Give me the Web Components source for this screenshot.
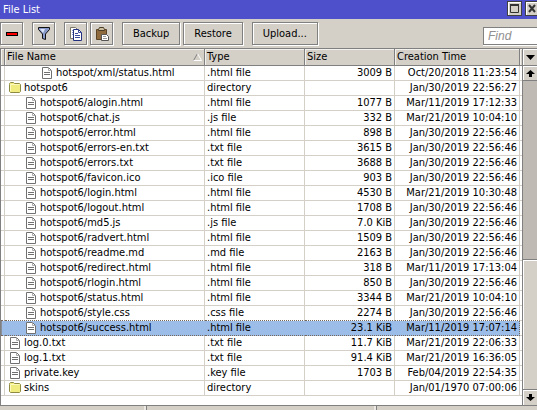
<!DOCTYPE html>
<html lang="en">
<head>
<meta charset="utf-8">
<title>File List</title>
<style>
html, body {
	height: 100%;
	margin: 0;
}
body {
	--face: #d4d0c8;
	--edge: #808080;
	--line: #d4d0c8;
	background: var(--face);
	color: #000;
	font: 11px/14px "DejaVu Sans Condensed", "DejaVu Sans", sans-serif;
	overflow: hidden;
}
</style>
</head>
<body>
<list-window>
	<title-bar slot="title">File List</title-bar>
	<tool-bar slot="tools">
		<tool-group>
			<tool-button icon="remove" label="Remove"></tool-button>
		</tool-group>
		<tool-group>
			<tool-button icon="filter" label="Filter"></tool-button>
		</tool-group>
		<tool-group>
			<tool-button icon="copy" label="Copy"></tool-button>
			<tool-button icon="paste" label="Paste"></tool-button>
		</tool-group>
		<tool-group>
			<tool-button>Backup</tool-button>
			<tool-button>Restore</tool-button>
		</tool-group>
		<tool-group>
			<tool-button>Upload...</tool-button>
		</tool-group>
		<find-box slot="end"></find-box>
	</tool-bar>
	<file-table></file-table>
	<scroll-strip slot="scroll"></scroll-strip>
	<status-bar slot="status"></status-bar>
</list-window>

<script>
function attach(host, html) {
	const tpl = document.createElement("template");
	tpl.innerHTML = html;
	host.attachShadow({ mode: "open" }).appendChild(tpl.content.cloneNode(true));
}

const ICONS = {
	remove: `<path d="M2 6h12v4H2z" fill="#000"/><path d="M3 7h10v2H3z" fill="#f00"/>`,
	filter: `<path d="M2.500 1.500h11v2L9.500 8v5.500l-3-1V8l-4-4.500z" fill="#8799c8" stroke="#111"/><path d="M4 3h5L7 7z" fill="#dce5f7"/>`,
	copy: `<path d="M2.500 1.500h5l2 2v9h-7z" fill="#fff" stroke="#7c7868"/><path d="M4 4.500h3M4 6.500h3M4 8.500h3" stroke="#8a98c8"/>
		<path d="M5.500 3.500h5l3 3v8h-8z" fill="#fff" stroke="#22307f"/><path d="M10.500 3.500v3h3M7 7.500h3M7 9.500h5M7 11.500h5" fill="none" stroke="#3c4a9c"/>`,
	paste: `<path d="M2.500 3.500h10v10h-10z" fill="#8f6a3c" stroke="#5c4426"/><path d="M4.500 4.500v-1l1-2h4l1 2v1z" fill="#c9bd9f" stroke="#4c3d26"/>
		<path d="M7.500 8.500h5l2 2v4h-7z" fill="#fff" stroke="#555"/><path d="M9 10.500h3M9 12.500h4" stroke="#999"/>`,
	file: `<path d="M2.500 1.500h6l3 3v8h-9z" fill="#fff" stroke="#707070"/><path d="M8.500 1.500v3h3" fill="none" stroke="#aaa"/><path d="M4 6.500h6M4 8.500h6" stroke="#707070"/>`,
	folder: `<path d="M1.500 3.500v-1l1-1h3l1 1h5l1 1v7l-1 1h-9l-1-1z" fill="#f0ec80" stroke="#8f8a42"/><path d="M2.500 10V3.500h9" fill="none" stroke="#fbf9bd"/>`
};

class GlyphIcon extends HTMLElement {
	constructor() {
		super();
		attach(this, `<style>
:host {
	display: block;
	flex: none;
	width: 16px;
	height: 16px;
}
:host([small]) {
	height: 14px;
}
svg {
	display: block;
	width: 100%;
	height: 100%;
}
</style>
<svg aria-hidden="true"></svg>`);
	}
	static get observedAttributes() {
		return ["name"];
	}
	attributeChangedCallback(name, oldval, newval) {
		this.shadowRoot.querySelector("svg").innerHTML = ICONS[newval] || "";
	}
}
customElements.define("glyph-icon", GlyphIcon);

class ListWindow extends HTMLElement {
	constructor() {
		super();
		attach(this, `<style>
:host {
	display: grid;
	height: 100vh;
	grid-template-columns: minmax(0, 1fr);
	grid-template-rows: auto auto minmax(0, 1fr) auto;
}
main {
	display: flex;
	min-height: 0;
	border-top: 1px solid var(--edge);
	border-left: 1px solid var(--edge);
	box-sizing: border-box;
}
#view {
	flex: 1;
	min-width: 0;
	overflow: hidden;
	background: #fff;
}
</style>
<slot name="title"></slot>
<slot name="tools"></slot>
<main><div id="view"><slot></slot></div><slot name="scroll"></slot></main>
<slot name="status"></slot>`);
	}
}
customElements.define("list-window", ListWindow);

class TitleBar extends HTMLElement {
	constructor() {
		super();
		attach(this, `<style>
:host {
	display: flex;
	justify-content: space-between;
	height: 19px;
	box-sizing: border-box;
	padding: 1px 0 0 3px;
	overflow: hidden;
	background: #4d4fcb;
	color: #fff;
}
h1 {
	margin: 0;
	font: inherit;
	line-height: 18px;
}
div {
	display: flex;
	gap: 3px;
	margin-right: -3px;
}
button {
	width: 15px;
	height: 15px;
	padding: 0;
	border: 1px solid #404040;
	background: var(--face);
	box-shadow: inset 1px 1px #fff;
}
svg {
	display: block;
	width: 13px;
	height: 13px;
}
</style>
<h1><slot></slot></h1>
<div>
	<button aria-label="Maximize"><svg><path d="M2.500 3.500h8v7h-8z" fill="none" stroke="#333"/><path d="M2 3h9" stroke="#333" stroke-width="2"/></svg></button>
	<button aria-label="Close"><svg><path d="M3 3l6 7M9 3l-6 7" stroke="#333" stroke-width="2"/></svg></button>
</div>`);
	}
}
customElements.define("title-bar", TitleBar);

class ToolBar extends HTMLElement {
	constructor() {
		super();
		attach(this, `<style>
:host {
	display: flex;
	justify-content: space-between;
	height: 29px;
	box-sizing: border-box;
	padding-top: 3px;
}
div {
	display: flex;
	gap: 9px;
}
</style>
<div><slot></slot></div>
<slot name="end"></slot>`);
	}
}
customElements.define("tool-bar", ToolBar);

class ToolGroup extends HTMLElement {
	constructor() {
		super();
		attach(this, `<style>
:host {
	display: flex;
	gap: 3px;
}
</style>
<slot></slot>`);
	}
}
customElements.define("tool-group", ToolGroup);

class ToolButton extends HTMLElement {
	constructor() {
		super();
		attach(this, `<style>
:host {
	display: block;
}
button {
	display: flex;
	align-items: center;
	box-sizing: border-box;
	height: 23px;
	padding: 0 10px;
	border: 1px solid var(--edge);
	background: var(--face);
	box-shadow: inset 1px 1px #fff, 1px 1px #fff;
	color: inherit;
	font: inherit;
}
:host([icon]) button {
	align-items: flex-start;
	padding: 3px 2px 2px 3px;
}
</style>
<button><slot></slot></button>`);
	}
	connectedCallback() {
		const name = this.getAttribute("icon");
		if (!name) return;
		const btn = this.shadowRoot.querySelector("button");
		btn.setAttribute("aria-label", this.getAttribute("label"));
		btn.innerHTML = `<glyph-icon name="${name}"></glyph-icon>`;
	}
}
customElements.define("tool-button", ToolButton);

class FindBox extends HTMLElement {
	constructor() {
		super();
		attach(this, `<style>
:host {
	display: block;
	padding-top: 5px;
}
input {
	display: block;
	box-sizing: border-box;
	width: 54px;
	height: 18px;
	padding: 0 4px;
	border: 1px solid var(--edge);
	border-right: 0;
	border-radius: 0;
	background: #fff;
	box-shadow: 0 1px #fff;
	font: italic 12px "Liberation Sans", sans-serif;
}
input::placeholder {
	color: #909090;
}
</style>
<input type="text" placeholder="Find" aria-label="Find">`);
	}
}
customElements.define("find-box", FindBox);

// name, type, size, created, indent level
const FILES = [
	["hotspot/xml/status.html", ".html file", "3009 B", "Oct/20/2018 11:23:54", 2],
	["hotspot6", "directory", "", "Jan/30/2019 22:56:27", 0],
	["hotspot6/alogin.html", ".html file", "1077 B", "Mar/11/2019 17:12:33", 1],
	["hotspot6/chat.js", ".js file", "332 B", "Mar/21/2019 10:04:10", 1],
	["hotspot6/error.html", ".html file", "898 B", "Jan/30/2019 22:56:46", 1],
	["hotspot6/errors-en.txt", ".txt file", "3615 B", "Jan/30/2019 22:56:46", 1],
	["hotspot6/errors.txt", ".txt file", "3688 B", "Jan/30/2019 22:56:46", 1],
	["hotspot6/favicon.ico", ".ico file", "903 B", "Jan/30/2019 22:56:46", 1],
	["hotspot6/login.html", ".html file", "4530 B", "Mar/21/2019 10:30:48", 1],
	["hotspot6/logout.html", ".html file", "1708 B", "Jan/30/2019 22:56:46", 1],
	["hotspot6/md5.js", ".js file", "7.0 KiB", "Jan/30/2019 22:56:46", 1],
	["hotspot6/radvert.html", ".html file", "1509 B", "Jan/30/2019 22:56:46", 1],
	["hotspot6/readme.md", ".md file", "2163 B", "Jan/30/2019 22:56:46", 1],
	["hotspot6/redirect.html", ".html file", "318 B", "Mar/11/2019 17:13:04", 1],
	["hotspot6/rlogin.html", ".html file", "850 B", "Jan/30/2019 22:56:46", 1],
	["hotspot6/status.html", ".html file", "3344 B", "Mar/21/2019 10:04:10", 1],
	["hotspot6/style.css", ".css file", "2274 B", "Jan/30/2019 22:56:46", 1],
	["hotspot6/success.html", ".html file", "23.1 KiB", "Mar/11/2019 17:07:14", 1],
	["log.0.txt", ".txt file", "11.7 KiB", "Mar/21/2019 22:06:33", 0],
	["log.1.txt", ".txt file", "91.4 KiB", "Mar/21/2019 16:36:05", 0],
	["private.key", ".key file", "1703 B", "Feb/04/2019 22:54:35", 0],
	["skins", "directory", "", "Jan/01/1970 07:00:06", 0]
];
const SELECTED = "hotspot6/success.html";

class FileTable extends HTMLElement {
	constructor() {
		super();
		attach(this, `<style>
:host {
	display: block;
}
table {
	width: 100%;
	table-layout: fixed;
	border-collapse: separate;
	border-spacing: 0;
}
.mark { width: 4px; }
.type { width: 100px; }
.size { width: 90px; }
.time { width: 125px; }
.rest { width: 2px; }
th, td {
	padding: 0 2px;
	border-right: 1px solid var(--line);
	overflow: hidden;
	white-space: nowrap;
	text-align: left;
	font-weight: normal;
}
th {
	height: 16px;
	border-right-color: var(--edge);
	border-bottom: 1px solid var(--edge);
	background: var(--face);
	box-shadow: inset 1px 1px #f4f2ee;
}
td {
	height: 14px;
	border-bottom: 1px solid var(--line);
}
th:first-child, td:first-child, th:last-child, td:last-child {
	padding: 0;
}
td:nth-child(2) {
	padding-left: 3px;
}
th:last-child, td:last-child {
	border-right: 0;
}
td:nth-child(4), td:nth-child(5) {
	text-align: right;
}
.name {
	display: flex;
	align-items: center;
	height: 14px;
	padding-left: calc(var(--level) * 16px);
}
.head {
	display: flex;
	align-items: center;
	justify-content: space-between;
}
.head svg {
	width: 9px;
	height: 8px;
}
.selected td {
	border-bottom: 1px dotted #75685a;
	border-right-color: #9cbde8;
	background: #9cbde8;
}
tr:has(+ .selected) td {
	border-bottom: 1px dotted #75685a;
}
.selected td:first-child {
	box-shadow: inset 1px 0 #8b8f98;
}
.selected td:nth-child(5) {
	border-right: 1px dotted #75685a;
}
.selected td:last-child, tr:has(+ .selected) td:last-child {
	border-bottom: 1px solid var(--line);
	background: #fff;
}
</style>
<table>
	<colgroup><col class="mark"><col><col class="type"><col class="size"><col class="time"><col class="rest"></colgroup>
	<thead><tr>
		<th></th>
		<th><div class="head">File Name <svg aria-hidden="true"><path d="M.500 7.500L4.500 .5" stroke="#808080"/><path d="M4.500 .5l4 7h-8" fill="none" stroke="#fff"/></svg></div></th>
		<th>Type</th><th>Size</th><th>Creation Time</th><th></th>
	</tr></thead>
	<tbody></tbody>
</table>`);
		this.shadowRoot.querySelector("tbody").innerHTML = FILES.map(([name, type, size, time, level]) =>
			`<tr${name == SELECTED ? ' class="selected"' : ""}>
				<td></td>
				<td><div class="name" style="--level: ${level}"><glyph-icon small name="${type == "directory" ? "folder" : "file"}"></glyph-icon>${name}</div></td>
				<td>${type}</td><td>${size}</td><td>${time}</td><td></td>
			</tr>`).join("");
	}
}
customElements.define("file-table", FileTable);

class ScrollStrip extends HTMLElement {
	constructor() {
		super();
		attach(this, `<style>
:host {
	display: flex;
	flex-direction: column;
	flex: none;
	width: 15px;
	box-sizing: border-box;
	border-left: 1px solid var(--edge);
	background: #bfbab3;
}
button {
	display: flex;
	align-items: center;
	justify-content: center;
	height: 15px;
	padding: 0;
	border: 0;
	border-bottom: 1px solid var(--edge);
	background: var(--face);
	box-shadow: inset 1px 1px #fff;
}
#menu {
	height: 17px;
}
#down {
	height: 16px;
	border-top: 1px solid var(--edge);
	border-bottom: 0;
}
#track {
	display: grid;
	flex: 1;
	grid-template-rows: 178fr 130fr;
}
#thumb {
	grid-row: 2;
	border-top: 1px solid var(--edge);
	background: var(--face);
	box-shadow: inset 1px 1px #fff;
}
svg {
	width: 9px;
	height: 7px;
}
</style>
<button id="menu" aria-label="Columns"><svg><path d="M0 1h9L4.500 6z"/></svg></button>
<button aria-label="Scroll up"><svg><path d="M4.500 0L9 4H6v3H3V4H0z"/></svg></button>
<div id="track"><div id="thumb"></div></div>
<button id="down" aria-label="Scroll down"><svg><path d="M4.500 7L9 3H6V0H3v3H0z"/></svg></button>`);
	}
}
customElements.define("scroll-strip", ScrollStrip);

class StatusBar extends HTMLElement {
	constructor() {
		super();
		attach(this, `<style>
:host {
	display: grid;
	grid-template-columns: 146fr 230fr 161fr;
	height: 5px;
	box-sizing: border-box;
	border-top: 1px solid var(--edge);
}
div + div {
	border-left: 1px solid var(--edge);
	box-shadow: -2px 0 #ece9e4;
}
</style>
<div></div><div></div><div></div>`);
	}
}
customElements.define("status-bar", StatusBar);
</script>
</body>
</html>
